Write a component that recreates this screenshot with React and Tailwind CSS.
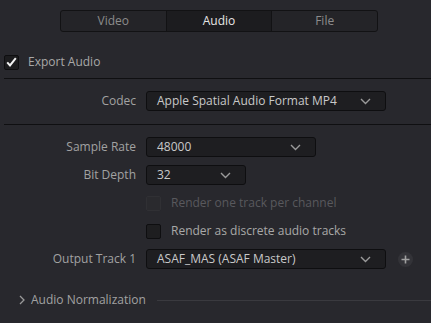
import React from "react";

function Chevron({ className = "" }) {
  return (
    <svg width="11" height="7" viewBox="0 0 11 7" className={className}>
      <path d="M1 1l4.5 4.5L10 1" fill="none" stroke="currentColor" strokeWidth="1.4" />
    </svg>
  );
}

function Select({ value, width }) {
  return (
    <div
      className={`flex h-[20px] items-center justify-between rounded-[3px] border border-[#0e0e10] bg-[#1e1e21] pl-[10px] pr-[14px] text-[#c9c9c9] ${width}`}
    >
      <span>{value}</span>
      <Chevron className="text-[#9a9a9a]" />
    </div>
  );
}

function Box({ disabled }) {
  return (
    <div
      className={`h-[15px] w-[15px] rounded-[2px] border ${
        disabled ? "border-[#303034] bg-[#2a2a2e]" : "border-[#0e0e10] bg-[#1e1e20]"
      }`}
    />
  );
}

export default function App() {
  return (
    <div
      className="h-[323px] w-[431px] overflow-hidden bg-[#28282d] text-[12px] text-[#a2a2a2]"
      style={{ fontFamily: '"Open Sans", "Noto Sans", sans-serif' }}
    >
      {/* Tabs */}
      <div className="flex justify-center pt-[10px] pl-[7px]">
        <div className="flex h-[22px] w-[318px] overflow-hidden rounded-[3px] border border-[#121214] bg-[#242428]">
          <div className="flex flex-1 items-center justify-center text-[#8c8c8c]">Video</div>
          <div className="flex flex-1 items-center justify-center border-x border-[#121214] bg-[#1c1c1f] text-[#e6e6e6]">
            Audio
          </div>
          <div className="flex flex-1 items-center justify-center text-[#8c8c8c]">File</div>
        </div>
      </div>

      {/* Export Audio */}
      <div className="mt-[21px] flex h-[18px] items-center gap-[9px] pl-[4px]">
        <div className="flex h-[15px] w-[15px] items-center justify-center rounded-[2px] border border-[#0e0e10] bg-[#1c1c1e]">
          <svg width="11" height="10" viewBox="0 0 11 10">
            <path d="M1.2 5.4l2.8 3L9.8 1.2" fill="none" stroke="#f2f2f2" strokeWidth="2" />
          </svg>
        </div>
        <span className="text-[#a8a8a8]">Export Audio</span>
      </div>
      <div className="mt-[7px] ml-[4px] h-px bg-[#0f0f11]" />

      {/* Codec */}
      <div className="mt-[12px] grid grid-cols-[136px_1fr] items-center gap-x-[10px]">
        <span className="text-right">Codec</span>
        <Select value="Apple Spatial Audio Format MP4" width="w-[240px]" />
      </div>
      <div className="mt-[13px] ml-[4px] h-px bg-[#0f0f11]" />

      {/* Audio settings */}
      <div className="mt-[12px] grid grid-cols-[136px_1fr] items-center gap-x-[10px] gap-y-[8px]">
        <span className="text-right">Sample Rate</span>
        <Select value="48000" width="w-[170px]" />

        <span className="text-right">Bit Depth</span>
        <Select value="32" width="w-[100px]" />

        <span />
        <div className="flex h-[20px] items-center gap-[10px]">
          <Box disabled />
          <span className="text-[#59595d]">Render one track per channel</span>
        </div>

        <span />
        <div className="flex h-[20px] items-center gap-[10px]">
          <Box />
          <span className="text-[#a8a8a8]">Render as discrete audio tracks</span>
        </div>

        <span className="text-right">Output Track 1</span>
        <div className="flex items-center gap-[12px]">
          <Select value="ASAF_MAS (ASAF Master)" width="w-[240px]" />
          <div className="flex h-[15px] w-[15px] items-center justify-center rounded-full bg-[#333338]">
            <svg width="9" height="9" viewBox="0 0 9 9">
              <path d="M4.5 0.5v8M0.5 4.5h8" stroke="#a0a0a0" strokeWidth="1.6" />
            </svg>
          </div>
        </div>
      </div>

      {/* Audio Normalization */}
      <div className="mt-[22px] flex items-center pl-[19px]">
        <svg width="6" height="10" viewBox="0 0 6 10" className="text-[#9a9a9a]">
          <path d="M1 1l4 4-4 4" fill="none" stroke="currentColor" strokeWidth="1.3" />
        </svg>
        <span className="ml-[6px] text-[#a2a2a2]">Audio Normalization</span>
        <div className="ml-[11px] h-px flex-1 bg-[#3a3a3f]" />
      </div>
    </div>
  );
}
